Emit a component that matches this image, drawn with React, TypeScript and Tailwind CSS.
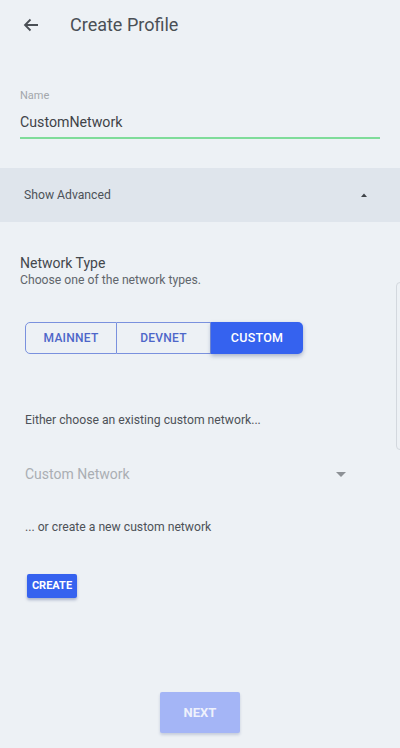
import React from 'react';

const NetworkToggle: React.FC = () => (
  <div className="flex h-[32px] w-[278px]">
    <button className="w-[92px] rounded-l-[5px] border border-[#7a91de] text-[12px] font-medium tracking-[0.02em] text-[#4d66c9]">
      MAINNET
    </button>
    <button className="w-[94px] border-y border-r border-[#7a91de] text-[12px] font-medium tracking-[0.02em] text-[#4d66c9]">
      DEVNET
    </button>
    <button className="w-[92px] rounded-r-[5px] bg-[#3562ef] text-[12.5px] font-medium tracking-[0.02em] text-white shadow-[0_2px_4px_rgba(40,60,120,0.35)]">
      CUSTOM
    </button>
  </div>
);

export default function App() {
  return (
    <div className="relative flex h-[748px] w-[400px] flex-col overflow-hidden bg-[#edf1f5] font-['Roboto',sans-serif]">
      {/* header */}
      <div className="flex h-[48px] items-center pt-[1px]">
        <svg className="ml-[23px]" width="16" height="14" viewBox="0 0 16 14" fill="none" stroke="#4a4f55" strokeWidth="1.8">
          <path d="M15 7H2M7.5 1.5L2 7l5.5 5.5" />
        </svg>
        <h1 className="ml-[31px] text-[18px] text-[#4a4f55]">Create Profile</h1>
      </div>

      {/* name field */}
      <div className="mx-[20px] mt-[41px]">
        <div className="text-[11px] leading-[14px] text-[#a3a7ab]">Name</div>
        <div className="mt-[10px] text-[14.2px] leading-[18px] text-[#3f4348]">CustomNetwork</div>
        <div className="mt-[6px] h-[2px] bg-[#7fdc9a]" />
      </div>

      {/* advanced bar */}
      <div className="mt-[29px] flex h-[54px] items-center justify-between bg-[#dfe5ec] pl-[24px] pr-[33px]">
        <span className="text-[12.2px] text-[#4d5258]">Show Advanced</span>
        <svg width="6" height="4" viewBox="0 0 6 4">
          <path d="M0 4L3 0.5L6 4Z" fill="#3f4348" />
        </svg>
      </div>

      {/* network type */}
      <div className="mt-[32px] px-[20px]">
        <div className="text-[14px] leading-[18px] text-[#43474c]">Network Type</div>
        <div className="text-[12.2px] leading-[17px] text-[#61666c]">Choose one of the network types.</div>
      </div>

      <div className="mt-[33px] px-[25px]">
        <NetworkToggle />
      </div>

      <div className="mt-[57px] px-[25px] text-[12.2px] text-[#4d5258]">
        Either choose an existing custom network...
      </div>

      {/* select */}
      <div className="mt-[35px] flex items-center justify-between pl-[25px] pr-[54px]">
        <span className="text-[14px] text-[#aaaeb3]">Custom Network</span>
        <svg width="10" height="5" viewBox="0 0 10 5">
          <path d="M0 0H10L5 5Z" fill="#8d9196" />
        </svg>
      </div>

      <div className="mt-[33px] px-[25px] text-[12.2px] text-[#4d5258]">
        ... or create a new custom network
      </div>

      <div className="mt-[35px] px-[27px]">
        <button className="h-[24px] w-[50px] rounded-[2px] bg-[#3562ef] text-[11px] font-bold text-white shadow-[0_2px_3px_rgba(40,60,120,0.35)]">
          CREATE
        </button>
      </div>

      <div className="mt-auto mb-[15px] flex justify-center">
        <button className="h-[41px] w-[80px] rounded-[2px] bg-[#a4b5f6] text-[13px] font-bold text-[#eef1fc] shadow-[0_2px_3px_rgba(40,60,120,0.2)]">
          NEXT
        </button>
      </div>

      {/* faint edge of an off-screen panel */}
      <div className="absolute right-[-6px] top-[282px] h-[168px] w-[10px] rounded-[4px] border border-[#d3d8de]" />
    </div>
  );
}
